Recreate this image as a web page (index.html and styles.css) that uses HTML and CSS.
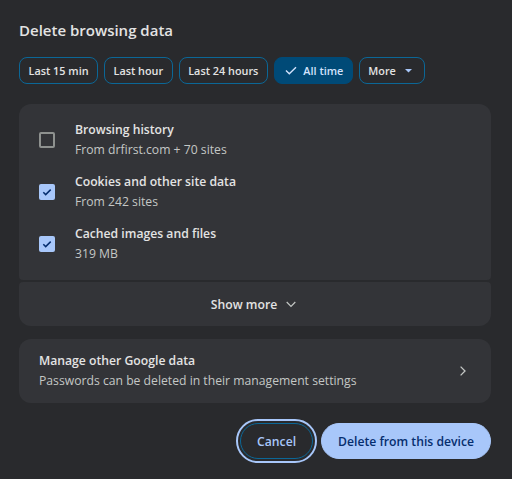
FILE: index.html
```html
<!DOCTYPE html>
<html>
<head>
<meta charset="utf-8">
<link rel="stylesheet" href="styles.css">
</head>
<body>
<div class="dialog">
  <h1 class="title">Delete browsing data</h1>
  <div class="chips">
    <button class="chip">Last 15 min</button>
    <button class="chip">Last hour</button>
    <button class="chip">Last 24 hours</button>
    <button class="chip chip-selected">
      <svg class="chip-check" width="12" height="9" viewBox="0 0 12 9"><path d="M1 4.6l3.3 3.2L11 1.2" fill="none" stroke="currentColor" stroke-width="1.4"/></svg>
      All time
    </button>
    <button class="chip chip-more">More
      <svg class="chip-arrow" width="7" height="4" viewBox="0 0 7 4"><path d="M0 0h7L3.5 3.6z" fill="#a8c7fa"/></svg>
    </button>
  </div>

  <div class="card-group">
    <div class="list">
      <div class="row">
        <span class="checkbox"></span>
        <div class="row-text">
          <div class="row-title">Browsing history</div>
          <div class="row-sub">From drfirst.com + 70 sites</div>
        </div>
      </div>
      <div class="row">
        <span class="checkbox checked"><svg width="16" height="16" viewBox="0 0 16 16"><path d="M4.3 8.2l2.4 2.4 5-5" fill="none" stroke="#062e6f" stroke-width="1.5"/></svg></span>
        <div class="row-text">
          <div class="row-title">Cookies and other site data</div>
          <div class="row-sub">From 242 sites</div>
        </div>
      </div>
      <div class="row">
        <span class="checkbox checked"><svg width="16" height="16" viewBox="0 0 16 16"><path d="M4.3 8.2l2.4 2.4 5-5" fill="none" stroke="#062e6f" stroke-width="1.5"/></svg></span>
        <div class="row-text">
          <div class="row-title">Cached images and files</div>
          <div class="row-sub">319 MB</div>
        </div>
      </div>
    </div>
    <div class="show-more">
      <span>Show more</span>
      <svg class="icon16" width="16" height="16" viewBox="0 0 16 16"><path d="M3.7 6l4.3 4.3L12.3 6" fill="none" stroke="#c4c7c5" stroke-width="1.2"/></svg>
    </div>
  </div>

  <div class="manage">
    <div class="manage-text">
      <div class="row-title">Manage other Google data</div>
      <div class="row-sub">Passwords can be deleted in their management settings</div>
    </div>
    <svg class="icon16" width="16" height="16" viewBox="0 0 16 16"><path d="M5.6 3.6l4.4 4.4-4.4 4.4" fill="none" stroke="#c4c7c5" stroke-width="1.3"/></svg>
  </div>

  <div class="actions">
    <button class="btn btn-cancel">Cancel</button>
    <button class="btn btn-delete">Delete from this device</button>
  </div>
</div>
</body>
</html>
```
FILE: styles.css
```css
* { box-sizing: border-box; }
html, body { margin: 0; height: 100%; }
body {
  background: #292a2d;
  font-family: "Open Sans", "Noto Sans", sans-serif;
  color: #e3e3e3;
}
.dialog {
  padding: 20px 21px 0 19px;
}
.title {
  margin: 0;
  font-size: 15px;
  font-weight: 600;
  line-height: 20px;
  color: #e3e3e3;
}
.chips {
  display: flex;
  gap: 6px;
  margin-top: 17px;
}
.chip {
  display: flex;
  align-items: center;
  height: 27px;
  padding: 0 8.5px;
  border: 1px solid #0b6797;
  border-radius: 8px;
  background: transparent;
  color: #e3e3e3;
  font-family: inherit;
  font-size: 10.85px;
  font-weight: 600;
}
.chip-selected {
  background: #004a77;
  border-color: #004a77;
  color: #d3e3fd;
  padding-left: 10.5px;
  gap: 6px;
}
.chip-more {
  padding-right: 12.5px;
  gap: 9px;
}
.chip-arrow { margin-top: 1px; }
.card-group {
  margin-top: 20px;
  display: flex;
  flex-direction: column;
  gap: 2px;
}
.list {
  background: #333438;
  border-radius: 12px 12px 4px 4px;
  padding: 10px 20px;
}
.row {
  display: flex;
  align-items: center;
  gap: 20px;
  height: 52px;
}
.checkbox {
  width: 16px;
  height: 16px;
  border: 2px solid #8e918f;
  border-radius: 2px;
  flex: none;
  display: block;
}
.checkbox.checked {
  border: none;
  background: #a8c7fa;
}
.checkbox svg { display: block; }
.row-title {
  font-size: 12.2px;
  font-weight: 600;
  line-height: 20px;
  color: #e3e3e3;
}
.row-sub {
  font-size: 12.2px;
  line-height: 20px;
  color: #c4c7c5;
}
.show-more {
  background: #333438;
  border-radius: 4px 4px 12px 12px;
  height: 44px;
  display: flex;
  align-items: center;
  justify-content: center;
  gap: 6px;
  font-size: 12.2px;
  font-weight: 600;
  color: #e3e3e3;
}
.icon16 { display: block; flex: none; }
.manage {
  margin-top: 13px;
  background: #333438;
  border-radius: 12px;
  padding: 12px 20px;
  display: flex;
  align-items: center;
  justify-content: space-between;
}
.actions {
  margin-top: 20px;
  display: flex;
  justify-content: flex-end;
  gap: 8px;
}
.btn {
  height: 36px;
  padding: 0 16px;
  border-radius: 18px;
  font-family: inherit;
  font-size: 12.2px;
  font-weight: 600;
  border: 1px solid transparent;
}
.btn-cancel {
  background: transparent;
  border-color: #0b6797;
  color: #a8c7fa;
  outline: 2px solid #a8c7fa;
  outline-offset: 2px;
}
.btn-delete {
  background: #a8c7fa;
  border-color: #a8c7fa;
  color: #062e6f;
}
```
